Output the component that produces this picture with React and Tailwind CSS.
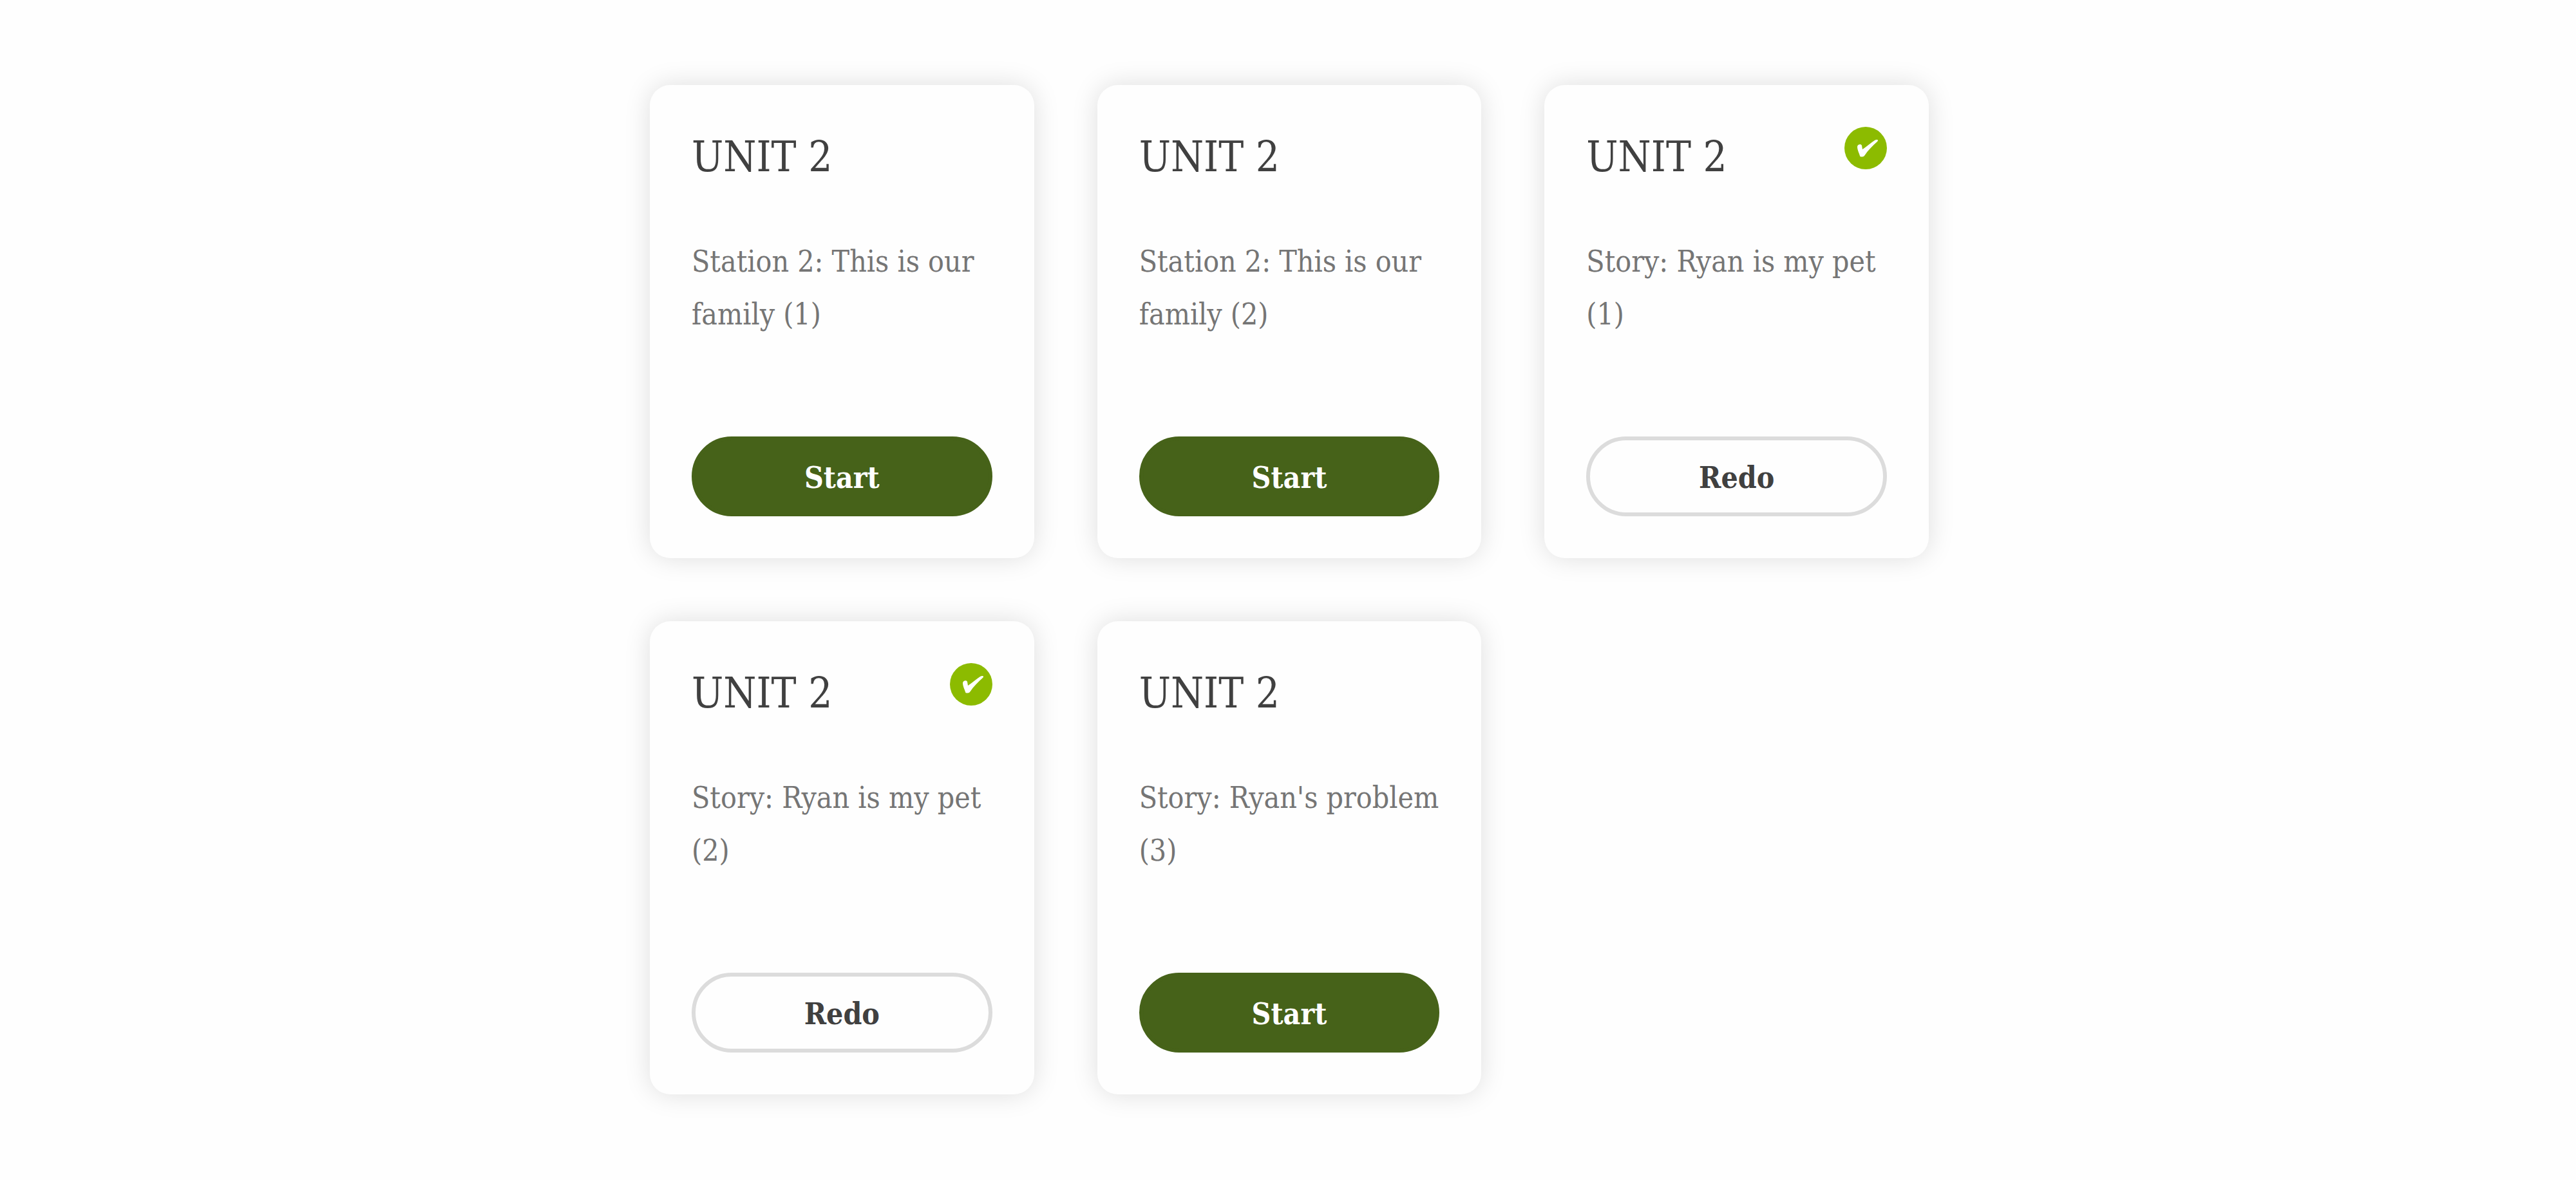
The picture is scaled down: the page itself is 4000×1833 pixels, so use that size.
const lessons = [
  { id: 1, unit: 'UNIT 2', title: 'Station 2: This is our family (1)', done: false },
  { id: 2, unit: 'UNIT 2', title: 'Station 2: This is our family (2)', done: false },
  { id: 3, unit: 'UNIT 2', title: 'Story: Ryan is my pet (1)', done: true },
  { id: 4, unit: 'UNIT 2', title: 'Story: Ryan is my pet (2)', done: true },
  { id: 5, unit: 'UNIT 2', title: "Story: Ryan's problem (3)", done: false },
];

function DoneBadge() {
  return (
    <svg viewBox="0 0 66 66" className="w-[66px] h-[66px] shrink-0" role="img" aria-label="Completed">
      <circle cx="33" cy="33" r="33" fill="#8cbb00" />
      <path
        d="M20 31c0-4 6-5 7-2l1 6C34 31 41 25 47 21c3-2 7-1 4 2C44 29 37 36 31 45c-2 2-7 2-7 0-1-4-4-9-4-14z"
        fill="#fff"
      />
    </svg>
  );
}

function LessonCard({ lesson }) {
  return (
    <article className="flex flex-col p-[65px] rounded-[32px] bg-[#fefefe] shadow-[0_0_40px_rgba(0,0,0,0.13)]">
      <div className="flex items-start justify-between">
        <h2 className="text-[65px] leading-[94px] text-[#404040]">{lesson.unit}</h2>
        {lesson.done && <DoneBadge />}
      </div>

      <p className="flex-1 mt-[74px] mb-[149px] text-[46px] leading-[82px] text-[#757575]">{lesson.title}</p>

      {lesson.done ? (
        <button className="h-[124px] pt-1 rounded-full border-[6px] border-[#dcdcdc] bg-[#fefefe] text-[46px] font-bold text-[#404040]">
          Redo
        </button>
      ) : (
        <button className="h-[124px] pt-1 rounded-full border-[6px] border-[#466219] bg-[#466219] text-[46px] font-bold text-white">
          Start
        </button>
      )}
    </article>
  );
}

export default function App() {
  return (
    <main className="min-h-screen bg-[#fefefe] pt-[132px] pb-32 pl-1 font-['Roboto_Slab','DejaVu_Serif_Condensed','DejaVu_Serif',serif]">
      <div className="max-w-[1986px] mx-auto grid grid-cols-3 gap-[98px]">
        {lessons.map((lesson) => (
          <LessonCard key={lesson.id} lesson={lesson} />
        ))}
      </div>
    </main>
  );
}
